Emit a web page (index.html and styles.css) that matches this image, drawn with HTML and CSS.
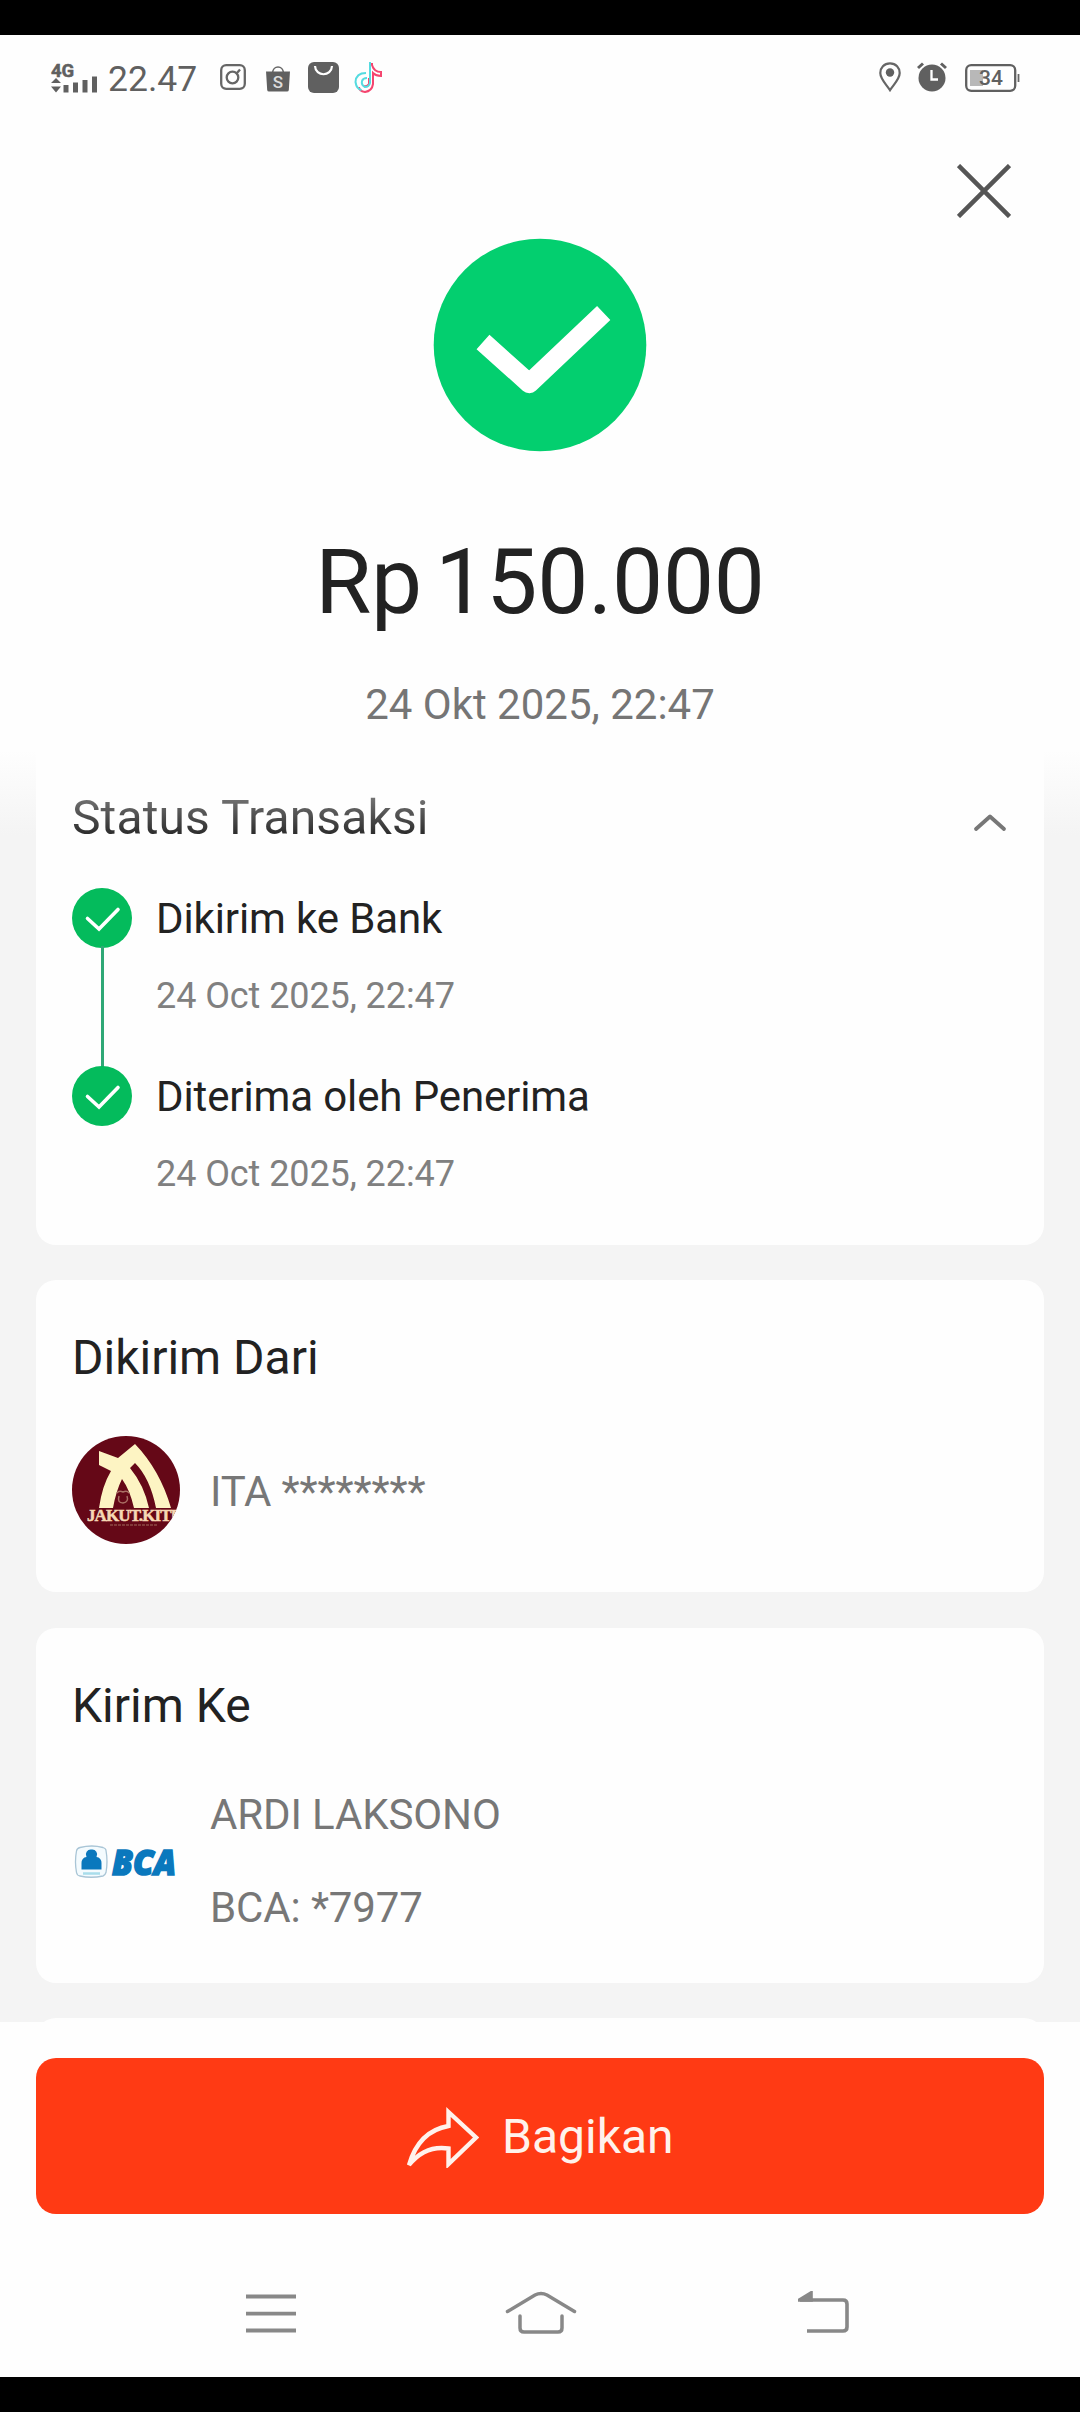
FILE: index.html
```html
<!DOCTYPE html>
<html lang="id">
<head>
<meta charset="utf-8">
<title>Status Transaksi</title>
<link rel="stylesheet" href="styles.css">
</head>
<body>
<div class="phone">
  <div class="statusbar">
    <div class="status-left">
      <svg class="signal" width="48" height="32" viewBox="0 0 48 32">
        <text class="net" x="0" y="14.500">4G</text>
        <path d="M0 21l5-5 5 5zM0 24.500h10l-5 6z"/>
        <path d="M12.500 23h5v7.500h-5zM22 20.500h5v10h-5zM31.500 18h5v12.500h-5zM41 14.500h5v16h-5z"/>
      </svg>
      <span class="clock">22.47</span>
      <svg class="app-ig" width="26" height="26" viewBox="0 0 26 26" fill="none" stroke="#666" stroke-width="2.300">
        <rect x="1.200" y="1.200" width="23.600" height="23.600" rx="5"/><circle cx="12.500" cy="13.500" r="5.800"/><path d="M17 9l3-3.500"/>
      </svg>
      <svg class="app-shop" width="24" height="27" viewBox="0 0 24 27">
        <path d="M6.500 8C7 0 17 0 17.500 8" fill="none" stroke="#666" stroke-width="1.600"/>
        <path d="M0 6.500h24L22.800 25q-.2 1.500-1.800 1.500H3Q1.400 26.500 1.200 25z" fill="#606060"/>
        <text class="shop-s" x="12" y="23">S</text>
      </svg>
      <svg class="app-bag" width="31" height="31" viewBox="0 0 31 31">
        <rect width="31" height="31" rx="6" fill="#606060"/><path d="M7 4c.5 11 16.500 11 17 0" fill="none" stroke="#fff" stroke-width="2.200"/>
      </svg>
      <svg class="app-tt" width="29" height="32" viewBox="0 0 29 32" fill="none" stroke-width="2">
        <path stroke="#f5456f" d="M18 2v2q2 7 9 7v4q-5 0-8-3v11q-1 7-8 8-6-1-6-5M15 17v6q-2 3-5 2"/>
        <path stroke="#55dbe0" d="M12 12Q2 12 1.500 21q1 7 6 8M16 1v21q-1 4-5 4-4-2-3-6 1-3 5-3"/>
      </svg>
    </div>
    <div class="status-right">
      <svg width="22" height="30" viewBox="0 0 22 30"><path d="M11 1.400C5 1.400 1.300 5.800 1.300 11c0 6 5.700 11 9.700 17.200C15 22 20.700 17 20.700 11c0-5.200-3.700-9.600-9.700-9.600z" fill="none" stroke="#666" stroke-width="2.200"/><circle cx="11" cy="10.500" r="4.200" fill="#606060"/></svg>
      <svg class="alarm" width="30" height="30" viewBox="0 0 30 30"><circle cx="15" cy="16" r="13.500" fill="#606060"/><path d="M1 6l5-4.500M29 6l-5-4.500" stroke="#606060" stroke-width="3"/><path d="M14.500 8v9.500H21" fill="none" stroke="#fff" stroke-width="2.300"/></svg>
      <svg class="battery" width="55" height="28" viewBox="0 0 55 28"><rect x="1.200" y="1.200" width="49" height="25.600" rx="5" fill="none" stroke="#606060" stroke-width="2.300"/><rect x="5" y="6" width="13" height="16" fill="#b8b8b8"/><path d="M53.500 10v8" stroke="#666" stroke-width="1.800"/><text class="level" x="14" y="21">34</text></svg>
    </div>
  </div>

  <header class="summary">
    <svg class="close" width="54" height="54" viewBox="0 0 54 54" stroke="#555" stroke-width="4.500"><path d="M1.500 1.500l51 51M52.500 1.500l-51 51"/></svg>
    <svg class="success" width="214" height="214" viewBox="0 0 214 214"><circle cx="107" cy="107" r="106.300" fill="#03cf6f"/><path d="M50 104L96.300 145.500 170.700 75" fill="none" stroke="#fff" stroke-width="19.300" stroke-linejoin="round"/></svg>
    <div class="amount">Rp 150.000</div>
    <div class="datetime">24 Okt 2025, 22:47</div>
  </header>

  <main class="cards">
    <section class="card card-status">
      <div class="card-head">
        <h2 class="title title-fade">Status Transaksi</h2>
        <svg width="34" height="20" viewBox="0 0 34 20" fill="none" stroke="#777" stroke-width="3.800" stroke-linecap="round" stroke-linejoin="round"><path d="M3 17L17 4.500 31 17"/></svg>
      </div>
      <div class="step step-linked">
        <svg class="dot" width="60" height="60" viewBox="0 0 60 60"><circle cx="30" cy="30" r="30" fill="#04bb5c"/><path d="M15.500 30.500L27 41 46 21.500" fill="none" stroke="#fff" stroke-width="3.600" stroke-linecap="round"/></svg>
        <div class="step-text"><div class="step-name">Dikirim ke Bank</div><div class="step-date">24 Oct 2025, 22:47</div></div>
      </div>
      <div class="step">
        <svg class="dot" width="60" height="60" viewBox="0 0 60 60"><circle cx="30" cy="30" r="30" fill="#04bb5c"/><path d="M15.500 30.500L27 41 46 21.500" fill="none" stroke="#fff" stroke-width="3.600" stroke-linecap="round"/></svg>
        <div class="step-text"><div class="step-name">Diterima oleh Penerima</div><div class="step-date">24 Oct 2025, 22:47</div></div>
      </div>
    </section>

    <section class="card card-from">
      <h2 class="title">Dikirim Dari</h2>
      <div class="party party-from">
        <svg class="avatar" width="108" height="108" viewBox="0 0 108 108">
          <clipPath id="disc"><circle cx="54" cy="54" r="54"/></clipPath>
          <g clip-path="url(#disc)">
            <rect width="108" height="108" fill="#650817"/>
            <path fill="#fdf4c3" d="M27 15L46 22 63 8Q88 34 99 72H84Q78 42 63 27L58 32Q72 49 77 72H62Q58 54 50 43 44 55 41 72H27Q30 50 39 35L27 29z"/>
            <path d="M45 57q2-3 6-1 4-2 6 1M47 60q-2 7 4 7 6-1 4-7" fill="none" stroke="#a96f64" stroke-width="1.500"/>
            <text class="brand" x="15" y="84.500" textLength="95">JAKUT.KITE</text>
            <path d="M38 89h48" stroke="#8d4a46" stroke-width="1.500" stroke-dasharray="3 1"/>
          </g>
        </svg>
        <div class="party-line">ITA ********</div>
      </div>
    </section>

    <section class="card card-to">
      <h2 class="title">Kirim Ke</h2>
      <div class="party party-to">
        <svg class="bank" width="108" height="40" viewBox="0 0 108 40">
          <path d="M8 5.500q12-3 23 0 3 1 3 3 2 11 0 22-1 3-3 3.500-12 2.500-23 0-3-.5-3.500-3.500-2-11 0-21.500.5-2.800 3.500-3.500z" fill="#f4fbfe" stroke="#a9c5d6" stroke-width="1.300"/>
          <path d="M19.500 7.500a5 5 0 0 1 5 7.500 5.500 5.500 0 0 1 5 6v6.500H9.500V21a5.500 5.500 0 0 1 5-6 5 5 0 0 1 5-7.500z" fill="#0a78bd"/>
          <path d="M11 31.500h17" stroke="#a8ddeb" stroke-width="2.500"/>
          <text class="bca" x="40" y="33" textLength="64" lengthAdjust="spacingAndGlyphs">BCA</text>
        </svg>
        <div class="party-lines"><div class="party-line">ARDI LAKSONO</div><div class="party-line">BCA: *7977</div></div>
      </div>
    </section>
    <section class="card card-next"></section>
  </main>

  <footer class="footer">
    <div class="share">
      <svg width="74" height="62" viewBox="0 0 74 62" fill="none" stroke="#fff2ec" stroke-width="4.400"><path d="M43.500 6L71 31.500 43.500 58V42.500Q20 39 4 59 14 25 43.500 20z"/></svg>
      <span>Bagikan</span>
    </div>
    <nav class="nav">
      <svg width="50" height="44" viewBox="0 0 50 44" stroke="#888" stroke-width="3.800"><path d="M0 4.500h50M0 21.700h50M0 38.500h50"/></svg>
      <svg class="home" width="72" height="46" viewBox="0 0 72 46" fill="none" stroke="#888" stroke-width="3.500" stroke-linecap="round"><path d="M2.500 20.500L30 4q6-3 12 0L69.500 20.500M15 25v12q0 4 4 4h34q4 0 4-4V25"/></svg>
      <svg width="52" height="46" viewBox="0 0 52 46" fill="none" stroke="#888" stroke-width="3.600"><path d="M2 9h43q4 0 4 4v23q0 4-4 4H9"/><path d="M1.500 9L13 2v7z" fill="#888"/></svg>
    </nav>
  </footer>
</div>
</body>
</html>
```
FILE: styles.css
```css
* { box-sizing: border-box; }
body { margin: 0; background: #000; font-family: Roboto, sans-serif; color: #222; }
svg { display: block; flex: none; }
.phone { width: 1080px; height: 2412px; display: flex; flex-direction: column; background: #fefefe; border-top: 35px solid #000; border-bottom: 35px solid #000; overflow: hidden; }

.statusbar { flex: none; height: 86px; padding: 0 60px 0 51px; display: flex; justify-content: space-between; align-items: center; }
.status-left, .status-right { display: flex; align-items: center; }
.signal { fill: #606060; overflow: visible; }
.net { font-size: 18.500px; font-weight: 700; stroke: #606060; stroke-width: .5; }
.clock { width: 90px; margin: 2px 0 0 9px; font-size: 35.500px; line-height: 42px; color: #606060; }
.app-ig { margin-left: 22px; }
.app-shop { margin-left: 20px; }
.app-bag { margin-left: 18px; }
.app-tt { margin-left: 15px; }
.shop-s { font-size: 17px; font-weight: 500; fill: #ddd; text-anchor: middle; }
.status-left .app-ig, .status-left .app-bag, .status-left .app-tt { margin-top: -2px; }
.status-right svg { margin-top: -2px; }
.status-right .alarm { margin-left: 16px; }
.status-right .battery { margin: 0 0 0 18px; }
.level { font-size: 21px; font-weight: 500; fill: #606060; }

.summary { flex: none; height: 629px; padding-top: 43px; display: flex; flex-direction: column; align-items: center; }
.close { align-self: flex-end; margin-right: 69px; }
.success { margin-top: 20px; }
.amount { margin-top: 75px; font-size: 91px; line-height: 110px; letter-spacing: -.2px; word-spacing: -9px; white-space: nowrap; }
.datetime { margin-top: 43px; font-size: 42px; line-height: 50px; color: #757575; }

.cards { flex: none; height: 1272px; padding: 0 36px; overflow: hidden; background: linear-gradient(#fefefe, #f4f4f4 85px); }
.card { background: #fefefe; border-radius: 20px; padding: 50px 36px 0; }
.card-status { height: 495px; padding-top: 40px; border-radius: 0 0 20px 20px; }
.card-head { display: flex; justify-content: space-between; align-items: center; }
.card-head svg { margin: 8px 1px 0 0; }
.title { margin: 0; font-size: 48px; font-weight: 400; line-height: 56px; }
.title-fade { letter-spacing: .12px; background: linear-gradient(#777 10%, #2b2b2b 80%); background-clip: text; color: transparent; }
.step { height: 178px; display: flex; gap: 24px; position: relative; }
.card-head + .step { margin-top: 42px; }
.step-linked::before { content: ""; position: absolute; left: 28.500px; top: 58px; width: 3px; height: 122px; background: #2fa876; }
.step-text { padding-top: 1px; }
.step-name { font-size: 42px; line-height: 60px; letter-spacing: -.12px; }
.step-date { margin-top: 26px; font-size: 36px; line-height: 42px; letter-spacing: -.08px; color: #808080; }

.card-from { height: 312px; margin-top: 35px; }
.party { display: flex; align-items: center; gap: 30px; }
.party-from { margin-top: 50px; }
.party-line { font-size: 42px; line-height: 50px; letter-spacing: -.12px; color: #777; }
.party-from .party-line { padding-top: 4px; }
.brand { font-family: "Liberation Serif", serif; font-size: 17px; font-weight: 700; fill: #f6d8b4; stroke: #f6d8b4; stroke-width: .5; }

.card-to { height: 355px; margin-top: 36px; }
.party-to { margin-top: 56px; }
.party-lines { display: grid; gap: 43px; }
.bca { font-family: "Open Sans", sans-serif; font-size: 36px; font-weight: 800; font-style: italic; fill: #0a78bd; stroke: #0a78bd; stroke-width: 1.6; }
.card-next { height: 100px; margin-top: 35px; }

.footer { flex: 1; padding: 36px 36px 0; }
.share { height: 156px; border-radius: 20px; background: #ff3a14; display: flex; align-items: center; padding-left: 369px; gap: 23px; font-size: 48px; line-height: 56px; color: #fff2ec; }
.share svg { margin-top: 1px; }
.share span { padding-top: 2px; }
.nav { display: flex; justify-content: space-between; align-items: center; height: 46px; margin: 77px 194px 0 210px; }
.nav .home { margin-right: 13px; }
```
